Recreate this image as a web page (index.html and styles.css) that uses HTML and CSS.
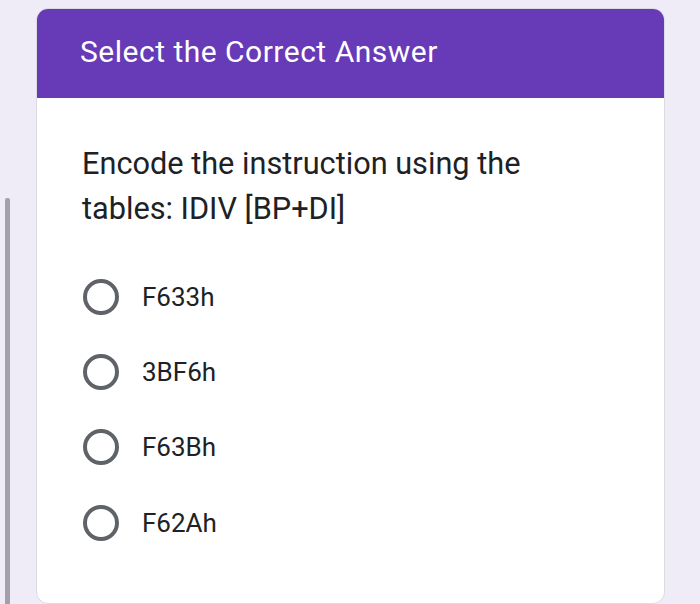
FILE: index.html
```html
<!DOCTYPE html>
<html>
<head>
<meta charset="utf-8">
<link rel="stylesheet" href="styles.css">
</head>
<body>
<div class="page">
  <div class="scrollbar"></div>
  <div class="card">
    <div class="card-header">Select the Correct Answer</div>
    <div class="card-body">
      <div class="question">Encode the instruction using the tables: IDIV [BP+DI]</div>
      <div class="options">
        <div class="option"><span class="radio"></span><span class="label">F633h</span></div>
        <div class="option"><span class="radio"></span><span class="label">3BF6h</span></div>
        <div class="option"><span class="radio"></span><span class="label">F63Bh</span></div>
        <div class="option"><span class="radio"></span><span class="label">F62Ah</span></div>
      </div>
    </div>
  </div>
</div>
</body>
</html>
```

FILE: styles.css
```css
html, body {
  margin: 0;
  padding: 0;
  background: #efebf7;
  width: 700px;
  height: 604px;
  overflow: hidden;
  font-family: Roboto, "Noto Sans", sans-serif;
}
.page {
  position: relative;
  width: 700px;
  height: 604px;
  padding: 8px 35px 0 36px;
  box-sizing: border-box;
}
.scrollbar {
  position: absolute;
  left: 5px;
  top: 198px;
  width: 5px;
  height: 420px;
  background: #a39fab;
  border-radius: 2px;
}
.card {
  background: #ffffff;
  border-radius: 12px;
  border: 1px solid #dadce0;
  overflow: hidden;
  height: 596px;
  box-sizing: border-box;
}
.card-header {
  background: #673ab7;
  color: #ffffff;
  height: 89px;
  padding: 25px 0 0 43px;
  box-sizing: border-box;
  font-size: 30px;
  letter-spacing: 0.5px;
}
.card-body {
  padding: 43px 0 0 45px;
}
.question {
  font-size: 30.7px;
  line-height: 45px;
  color: #202124;
  width: 500px;
}
.options {
  display: flex;
  flex-direction: column;
  gap: 39.2px;
  margin-top: 48px;
}
.option {
  display: flex;
  align-items: center;
  height: 36px;
}
.radio {
  width: 28px;
  height: 28px;
  border: 4px solid #5f6368;
  border-radius: 50%;
  flex: none;
  margin-left: 1px;
}
.label {
  margin-left: 23px;
  font-size: 26px;
  color: #202124;
}
```
